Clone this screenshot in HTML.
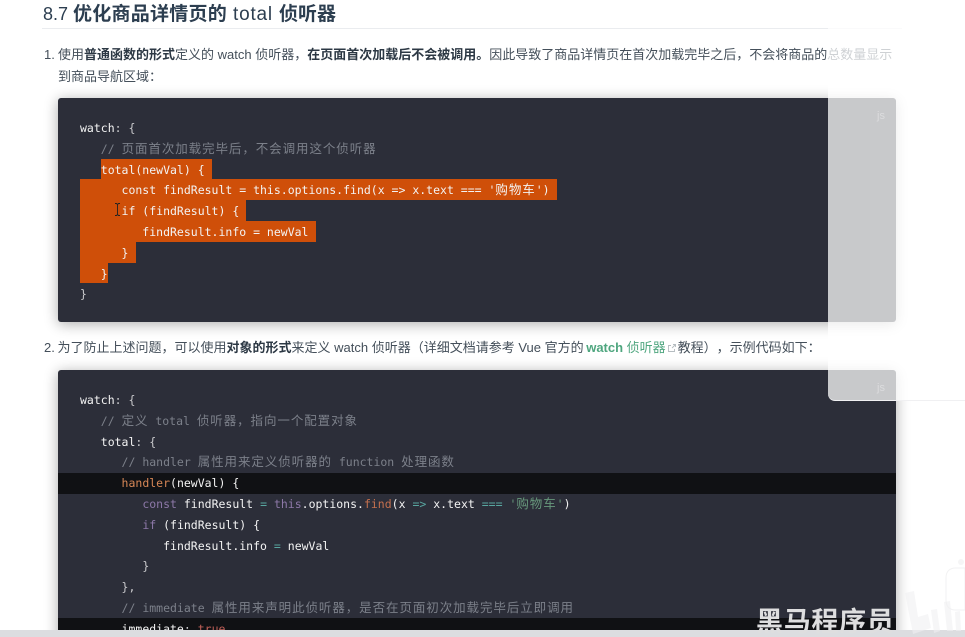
<!DOCTYPE html>
<html lang="zh">
<head>
<meta charset="utf-8">
<style>
html,body{margin:0;padding:0;background:#fff;width:965px;height:637px;overflow:hidden}
body{position:relative;font-family:"Liberation Sans","Noto Sans CJK SC",sans-serif;color:#3c4854;filter:blur(.3px)}
.a{position:absolute;white-space:nowrap}
.hd{position:absolute;top:1.5px;font-size:19px;line-height:25px;font-weight:700;color:#2c3e50;white-space:nowrap}
.hd.n{font-weight:400}
.rule{position:absolute;left:42px;top:28px;width:860px;height:1px;background:#eaecef}
.p{font-size:13px;line-height:22px;color:#444f5a;text-spacing-trim:space-all}
.p b{color:#2c3844}
.block{position:absolute;left:58px;width:838px;background:#2c2e39;border-radius:3px;box-shadow:0 2px 14px rgba(0,0,0,.33)}
pre{position:absolute;margin:0;left:80px;font:11.5px/20.8px "DejaVu Sans Mono","Noto Sans CJK SC",monospace;color:#e4e4e6}
pre i{font-style:normal;font-family:"Noto Sans CJK SC",sans-serif;font-size:12.5px;letter-spacing:.92px;line-height:0;text-spacing-trim:space-all}
.c{color:#7c808a}
.hl{position:absolute;background:#cf4f09}
.dark{position:absolute;left:58px;width:838px;background:#101114}
.k{color:#8d78a8}.f{color:#c4704e}.o{color:#58a6a0}.s{color:#67987c}.h{color:#d78756}.t{color:#bf5f58}.g{color:#c9c9cc}
.w{color:#f3f3f3}
.panel{position:absolute;left:828px;top:0;width:137px;height:401px;background:rgba(255,255,255,.74);border-bottom:1px solid #f0f0f2;border-bottom-left-radius:7px;box-sizing:border-box}
.js{position:absolute;font-size:11px;color:#dcdcde}
.strip{position:absolute;left:0;top:630px;width:965px;height:7px;background:#dcdde0}
.wm{position:absolute;left:756px;top:604px;font:700 27px/32px "Noto Sans CJK SC",sans-serif;color:#dededf;letter-spacing:.7px;white-space:nowrap}
</style>
</head>
<body>
<div class="hd n" style="left:43px;font-size:18px">8.7</div>
<div class="hd" style="left:73px;letter-spacing:.25px">优化商品详情页的</div>
<div class="hd n" style="left:233px;letter-spacing:.8px">total</div>
<div class="hd" style="left:279px">侦听器</div>
<div class="rule"></div>

<div class="a p" style="left:44px;top:44px">1.</div>
<div class="a p" style="left:58px;top:44px">使用<b>普通函数的形式</b>定义的 watch 侦听器，<b>在页面首次加载后不会被调用。</b>因此导致了商品详情页在首次加载完毕之后，不会将商品的总数量显示</div>
<div class="a p" style="left:58px;top:66px">到商品导航区域：</div>

<div class="block" style="top:98px;height:224px"></div>
<div class="hl" style="left:101px;top:158.6px;width:110.5px;height:20.8px"></div>
<div class="hl" style="left:80px;top:179.4px;width:477px;height:20.8px"></div>
<div class="hl" style="left:80px;top:200.2px;width:166px;height:20.8px"></div>
<div class="hl" style="left:80px;top:221px;width:235.5px;height:20.8px"></div>
<div class="hl" style="left:80px;top:241.8px;width:55.7px;height:20.8px"></div>
<div class="hl" style="left:80px;top:262.6px;width:27.5px;height:20.4px"></div>
<pre style="top:118px"><span class="w">watch</span><span class="g">: {</span>
   <span class="c">// <i>页面首次加载完毕后，不会调用这个侦听器</i></span>
<span class="w">   total(newVal) {
      const findResult = this.options.find(x =&gt; x.text === '<i>购物车</i>')
      if (findResult) {
         findResult.info = newVal
      }
   }</span>
<span class="g">}</span></pre>
<svg class="a" style="left:114px;top:203px" width="7" height="13" viewBox="0 0 7 13"><path d="M1 .5h1.5l1 1 1-1H6M3.5 1.5v10M1 12.5h1.5l1-1 1 1H6" fill="none" stroke="#222" stroke-width=".9"/></svg>

<div class="a p" style="left:44px;top:337px">2.</div>
<div class="a p" style="left:57.5px;top:337px">为了防止上述问题，可以使用<b>对象的形式</b>来定义 watch 侦听器（详细文档请参考 Vue 官方的 <span style="color:#4fa67f;margin-left:-1px"><b style="color:#4fa67f">watch</b> 侦听器</span><svg width="10" height="10" viewBox="0 0 10 10" style="margin:0 1px 0 1px;vertical-align:-1px"><path d="M7.5 6v2.5h-6v-6H4M6 1.5h2.5V4M8.5 1.5 5 5" fill="none" stroke="#b5bcc0" stroke-width=".9"/></svg>教程），示例代码如下：</div>

<div class="block" style="top:370px;height:280px"></div>
<div class="dark" style="top:472.8px;height:20.8px"></div>
<div class="dark" style="top:617.6px;height:14px"></div>
<pre style="top:390px"><span class="w">watch</span><span class="g">: {</span>
   <span class="c">// <i>定义</i> total <i>侦听器，指向一个配置对象</i></span>
   <span class="w">total</span><span class="g">: {</span>
      <span class="c">// handler <i>属性用来定义侦听器的</i> function <i>处理函数</i></span>
      <span class="h">handler</span><span class="w">(newVal) {</span>
         <span class="k">const</span> <span class="w">findResult</span> <span class="o">=</span> <span class="k">this</span><span class="w">.options.</span><span class="f">find</span><span class="w">(x</span> <span class="o">=&gt;</span> <span class="w">x.text</span> <span class="o">===</span> <span class="s">'<i>购物车</i>'</span><span class="w">)</span>
         <span class="k">if</span> <span class="w">(findResult) {</span>
            <span class="w">findResult.info</span> <span class="o">=</span> <span class="w">newVal</span>
         <span class="g">}</span>
      <span class="g">},</span>
      <span class="c">// immediate <i>属性用来声明此侦听器，是否在页面初次加载完毕后立即调用</i></span>
      <span class="w">immediate</span><span class="g">:</span> <span class="t">true</span></pre>

<div class="strip"></div>
<div class="panel"></div>
<div class="js" style="left:877px;top:110px">js</div>
<div class="js" style="left:877px;top:382px">js</div>

<div class="wm">黑马程序员</div>
<svg class="a" style="left:900px;top:540px" width="65" height="97" viewBox="0 0 65 97">
<path d="M46 38q0-10 10-10h9v42H56q-10 0-10-10z" fill="#fff" stroke="#f2f2f3" stroke-width="1"/>
<circle cx="61" cy="22" r="3" fill="#f5f5f6"/>
<path d="M5 53l9-2 4 26 10-3 3 14-18 6zM31 70l6-1 3 22-6 2zM44 62l6-1 3 30h-6zM55 72l5-1 1 20h-5z" fill="#f0f0f2" opacity=".6"/>
</svg>
</body>
</html>
